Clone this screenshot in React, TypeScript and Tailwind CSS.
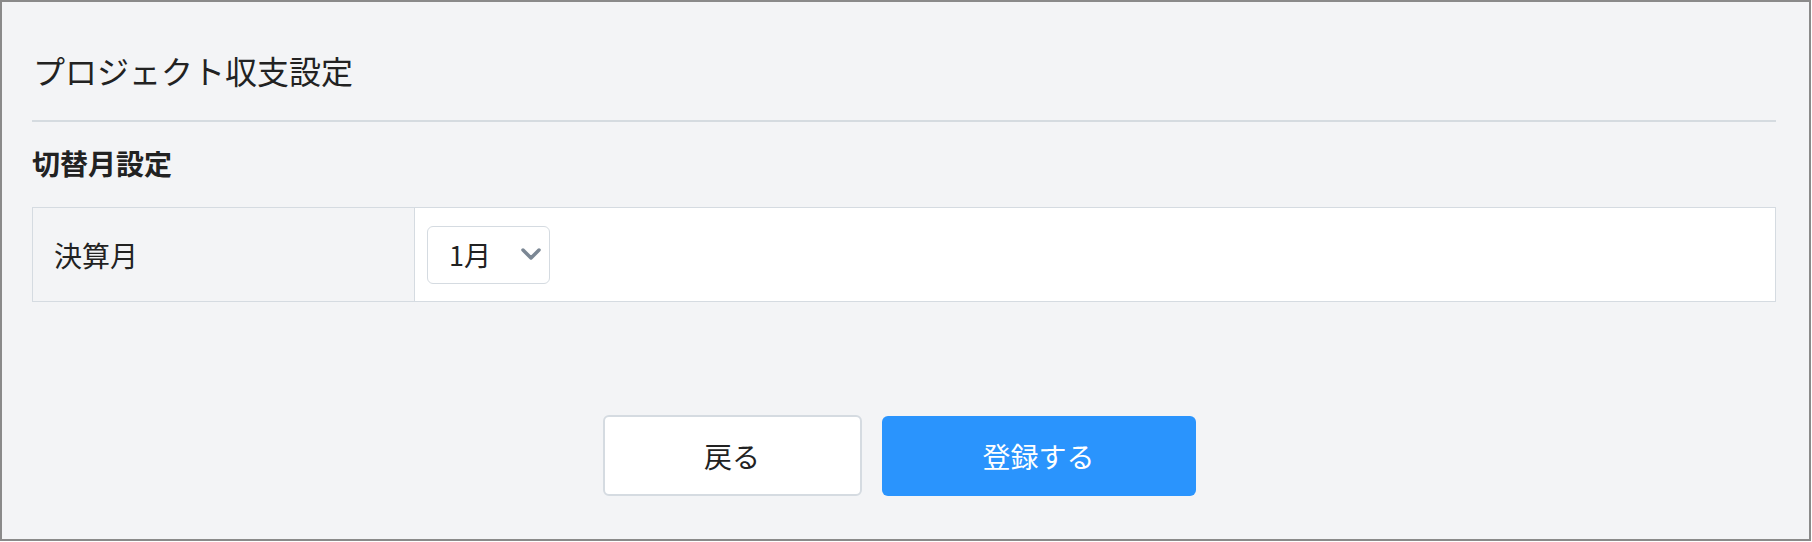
const font = { fontFamily: '"Noto Sans CJK JP", "Noto Sans", sans-serif' };

export default function App() {
  return (
    <div className="bg-white w-[1812px] h-[542px]" style={font}>
      <div className="w-[1811px] h-[541px] border-[2.5px] border-[#8a8a8a] bg-[#f3f4f6] text-[#222]">
        {/* タイトル */}
        <div className="pt-[44px] pl-[31px]">
          <h1 className="text-[32px] leading-[48px] font-normal">プロジェクト収支設定</h1>
        </div>
        <div className="mt-[26px] ml-[30px] w-[1744px] h-[2px] bg-[#d5dbe0]" />

        <div className="ml-[30px] w-[1744px]">
          <h2 className="mt-[21px] text-[28px] leading-[40px] font-bold">切替月設定</h2>

          {/* 決算月テーブル */}
          <div className="mt-[24px] flex h-[95px] border-[1.5px] border-[#d5dbe1]">
            <div className="w-[382px] flex items-center pl-[21px] border-r-[1.5px] border-[#d5dbe1] text-[28px]">
              決算月
            </div>
            <div className="flex-1 bg-white flex items-center pl-[12px]">
              <div className="w-[123px] h-[58px] rounded-[6px] border-[1.5px] border-[#d5dbe1] bg-white flex items-center pl-[21px] gap-[30px]">
                <span className="text-[27px] leading-none">1月</span>
                <svg width="20" height="13" viewBox="0 0 20 13" className="text-[#7b8794]">
                  <polyline
                    points="2,2 10,10 18,2"
                    fill="none"
                    stroke="currentColor"
                    strokeWidth="3.5"
                    strokeLinecap="round"
                    strokeLinejoin="round"
                  />
                </svg>
              </div>
            </div>
          </div>
        </div>

        {/* ボタン */}
        <div className="mt-[113px] flex justify-center gap-[20px] pr-[13px]">
          <button className="w-[259px] h-[81px] rounded-[6px] border-2 border-[#d5dbe1] bg-white text-[28px] text-[#222]">
            戻る
          </button>
          <button className="w-[314px] h-[80px] mt-[1px] rounded-[6px] bg-[#2a94fd] text-[28px] text-white">
            登録する
          </button>
        </div>
      </div>
    </div>
  );
}
